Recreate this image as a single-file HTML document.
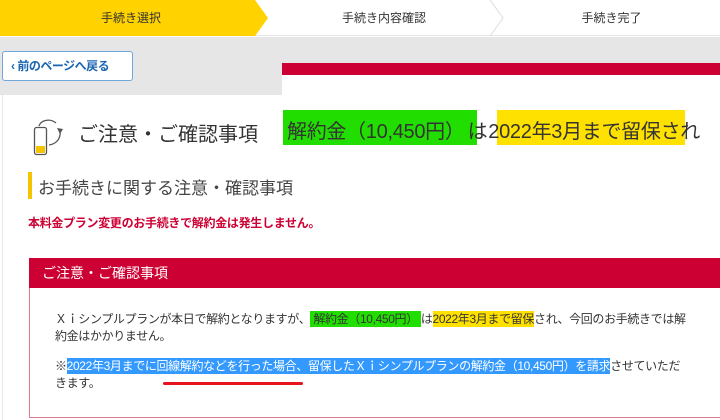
<!DOCTYPE html>
<html><head><meta charset="utf-8"><style>
*{margin:0;padding:0;box-sizing:border-box}
body{width:720px;height:420px;overflow:hidden;background:#fff;font-family:"Liberation Sans","Noto Sans CJK JP",sans-serif;color:#333;position:relative}
.a{position:absolute;white-space:nowrap}
.g{background:#22dd00;padding:1px 3px}
.y{background:#ffe100;padding:1px 0}
.b{background:#3399ff;color:#fff;padding:1px 0}
</style></head><body>
<div class="a" style="left:0;top:0;width:720px;height:36px;background:#fff;border-bottom:1px solid #e6e6e6"></div>
<svg class="a" style="left:0;top:0" width="720" height="37">
<polygon points="0,0 255,0 268,18 255,36 0,36" fill="#ffd200"/>
<polyline points="490,0 503,18 490,36" fill="none" stroke="#ddd" stroke-width="1"/>
</svg>
<div class="a" style="left:0;width:262px;top:9px;text-align:center;font-size:12px;color:#333">手続き選択</div>
<div class="a" style="left:268px;width:232px;top:9px;text-align:center;font-size:12px;color:#333">手続き内容確認</div>
<div class="a" style="left:503px;width:217px;top:9px;text-align:center;font-size:12px;color:#333">手続き完了</div>
<div class="a" style="left:0;top:37px;width:720px;height:26px;background:#e6e6e6"></div>
<div class="a" style="left:0;top:63px;width:282px;height:32px;background:#e6e6e6"></div>
<div class="a" style="left:282px;top:63px;width:438px;height:12px;background:#cc0033"></div>
<div class="a" style="left:2px;top:51px;width:131px;height:30px;background:#fff;border:1px solid #6fa8dc;border-radius:3px;font-size:12px;font-weight:bold;color:#1a66b3;line-height:28px;padding-left:8px;letter-spacing:-0.5px">‹ 前のページへ戻る</div>
<div class="a" style="left:2px;top:95px;width:1px;height:325px;background:#e6e6e6"></div>
<svg class="a" style="left:30px;top:115px" width="36" height="42">
<rect x="4.5" y="12.5" width="12" height="27" rx="2" fill="#fff" stroke="#555" stroke-width="1.3"/>
<rect x="6" y="31" width="9" height="7" fill="#f5c400"/>
<path d="M9 11 C11 5,20 3,26 8" fill="none" stroke="#555" stroke-width="1.3"/>
<path d="M19 30 C26 29,31 24,30 16" fill="none" stroke="#555" stroke-width="1.3"/>
<polygon points="27,13 33,14 30,19" fill="#555"/>
</svg>
<div class="a" style="left:78px;top:118px;font-size:20px;color:#333">ご注意・ご確認事項</div>
<div class="a" style="left:283px;top:110px;width:194px;height:35px;background:#22dd00"></div>
<div class="a" style="left:497px;top:110px;width:188px;height:35px;background:#ffe100"></div>
<div class="a" style="left:287px;top:115px;font-size:20px;color:#333;letter-spacing:-0.3px">解約金（10,450円）<span style="margin-left:3px">は</span><span style="margin-left:1px">2022年3月まで留保</span>され</div>
<div class="a" style="left:28px;top:172px;width:4px;height:27px;background:#f5c400"></div>
<div class="a" style="left:38px;top:174px;font-size:17px;color:#444">お手続きに関する注意・確認事項</div>
<div class="a" style="left:28px;top:214px;font-size:12px;font-weight:bold;color:#cc0033;letter-spacing:-0.3px">本料金プラン変更のお手続きで解約金は発生しません。</div>
<div class="a" style="left:29px;top:258px;width:691px;height:160px;border:1px solid #e07a8f;border-right:none"></div>
<div class="a" style="left:29px;top:258px;width:691px;height:30px;background:#cc0033;color:#fff;font-size:14px;line-height:30px;padding-left:13px">ご注意・ご確認事項</div>
<div class="a" style="left:163px;top:382px;width:140px;height:3px;background:#e8141c;border-radius:2px"></div>
<div class="a" style="left:55px;top:311px;font-size:12px;line-height:17px;color:#333;letter-spacing:-0.35px">
<div>Ｘｉシンプルプランが本日で解約となりますが、<span class="g">解約金（10,450円）</span>は<span class="y">2022年3月まで留保</span>され、今回のお手続きでは解</div>
<div>約金はかかりません。</div>
<div style="margin-top:13px">※<span class="b">2022年3月までに回線解約などを行った場合、留保したＸｉシンプルプランの解約金（10,450円）を請求</span>させていただ</div>
<div>きます。</div>
</div>
</body></html>
